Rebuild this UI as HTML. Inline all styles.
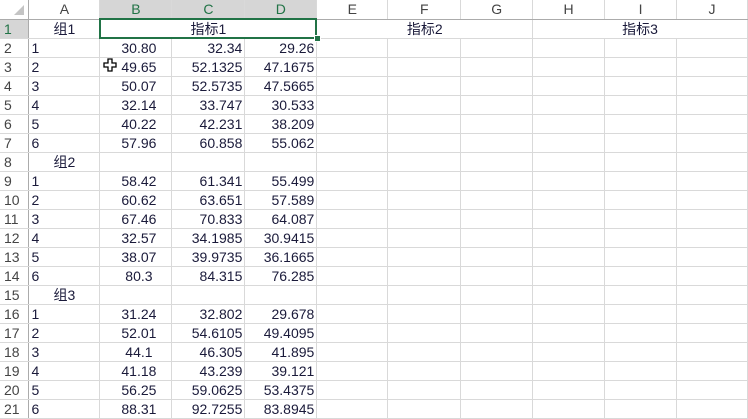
<!DOCTYPE html>
<html><head><meta charset="utf-8"><style>
body{margin:0;width:748px;height:418px;overflow:hidden;background:#fff;font-family:"Liberation Sans","Noto Sans CJK SC",sans-serif;}
table{border-collapse:collapse;table-layout:fixed;position:absolute;left:0;top:0;}
td{height:18px;padding:0 2px;border:1px solid #d9d9d9;font-size:14px;color:#1a1a3a;white-space:nowrap;overflow:hidden;line-height:18px;}
tr.h td{background:#fff;color:#444;text-align:center;border-bottom:1px solid #ababab;border-top:none;}
tr.h td.sel{background:#d6d6d6;color:#217346;border-bottom:2px solid #217346;}
td.rh{background:#fff;color:#444;text-align:left;padding-left:4px;border-left:none;border-right:1px solid #ababab;}
td.rh.sel{background:#d6d6d6;color:#217346;}
td.c{text-align:center}
td.r{text-align:right}
td.b{text-align:center;padding-left:8px}
.selbox{position:absolute;left:99px;top:18px;width:214px;height:17px;border:2px solid #217346;}
.handle{position:absolute;left:314px;top:35px;width:5px;height:5px;background:#217346;border:1px solid #fff;}
.corner{position:absolute;left:14px;top:5px;width:0;height:0;border-left:10px solid transparent;border-bottom:10px solid #c4c4c4;}
</style></head><body>
<table>
<colgroup><col style="width:29px"><col style="width:71px"><col style="width:72px"><col style="width:73px"><col style="width:72px"><col style="width:71px"><col style="width:73px"><col style="width:72px"><col style="width:72px"><col style="width:72px"><col style="width:71px"></colgroup>
<tr class="h"><td style="background:#fff;border-left:none;border-right:1px solid #ababab"></td><td>A</td><td class="sel">B</td><td class="sel">C</td><td class="sel">D</td><td>E</td><td>F</td><td>G</td><td>H</td><td>I</td><td>J</td></tr>
<tr><td class="rh sel">1</td><td class="c">组1</td><td colspan="3" class="c">指标1</td><td colspan="3" class="c">指标2</td><td colspan="3" class="c">指标3</td></tr>
<tr><td class="rh">2</td><td>1</td><td class="b">30.80</td><td class="r">32.34</td><td class="r">29.26</td><td></td><td></td><td></td><td></td><td></td><td></td></tr>
<tr><td class="rh">3</td><td>2</td><td class="b">49.65</td><td class="r">52.1325</td><td class="r">47.1675</td><td></td><td></td><td></td><td></td><td></td><td></td></tr>
<tr><td class="rh">4</td><td>3</td><td class="b">50.07</td><td class="r">52.5735</td><td class="r">47.5665</td><td></td><td></td><td></td><td></td><td></td><td></td></tr>
<tr><td class="rh">5</td><td>4</td><td class="b">32.14</td><td class="r">33.747</td><td class="r">30.533</td><td></td><td></td><td></td><td></td><td></td><td></td></tr>
<tr><td class="rh">6</td><td>5</td><td class="b">40.22</td><td class="r">42.231</td><td class="r">38.209</td><td></td><td></td><td></td><td></td><td></td><td></td></tr>
<tr><td class="rh">7</td><td>6</td><td class="b">57.96</td><td class="r">60.858</td><td class="r">55.062</td><td></td><td></td><td></td><td></td><td></td><td></td></tr>
<tr><td class="rh">8</td><td class="c">组2</td><td></td><td></td><td></td><td></td><td></td><td></td><td></td><td></td><td></td></tr>
<tr><td class="rh">9</td><td>1</td><td class="b">58.42</td><td class="r">61.341</td><td class="r">55.499</td><td></td><td></td><td></td><td></td><td></td><td></td></tr>
<tr><td class="rh">10</td><td>2</td><td class="b">60.62</td><td class="r">63.651</td><td class="r">57.589</td><td></td><td></td><td></td><td></td><td></td><td></td></tr>
<tr><td class="rh">11</td><td>3</td><td class="b">67.46</td><td class="r">70.833</td><td class="r">64.087</td><td></td><td></td><td></td><td></td><td></td><td></td></tr>
<tr><td class="rh">12</td><td>4</td><td class="b">32.57</td><td class="r">34.1985</td><td class="r">30.9415</td><td></td><td></td><td></td><td></td><td></td><td></td></tr>
<tr><td class="rh">13</td><td>5</td><td class="b">38.07</td><td class="r">39.9735</td><td class="r">36.1665</td><td></td><td></td><td></td><td></td><td></td><td></td></tr>
<tr><td class="rh">14</td><td>6</td><td class="b">80.3</td><td class="r">84.315</td><td class="r">76.285</td><td></td><td></td><td></td><td></td><td></td><td></td></tr>
<tr><td class="rh">15</td><td class="c">组3</td><td></td><td></td><td></td><td></td><td></td><td></td><td></td><td></td><td></td></tr>
<tr><td class="rh">16</td><td>1</td><td class="b">31.24</td><td class="r">32.802</td><td class="r">29.678</td><td></td><td></td><td></td><td></td><td></td><td></td></tr>
<tr><td class="rh">17</td><td>2</td><td class="b">52.01</td><td class="r">54.6105</td><td class="r">49.4095</td><td></td><td></td><td></td><td></td><td></td><td></td></tr>
<tr><td class="rh">18</td><td>3</td><td class="b">44.1</td><td class="r">46.305</td><td class="r">41.895</td><td></td><td></td><td></td><td></td><td></td><td></td></tr>
<tr><td class="rh">19</td><td>4</td><td class="b">41.18</td><td class="r">43.239</td><td class="r">39.121</td><td></td><td></td><td></td><td></td><td></td><td></td></tr>
<tr><td class="rh">20</td><td>5</td><td class="b">56.25</td><td class="r">59.0625</td><td class="r">53.4375</td><td></td><td></td><td></td><td></td><td></td><td></td></tr>
<tr><td class="rh">21</td><td>6</td><td class="b">88.31</td><td class="r">92.7255</td><td class="r">83.8945</td><td></td><td></td><td></td><td></td><td></td><td></td></tr>
</table>
<div class="corner"></div>
<div class="selbox"></div>
<div class="handle"></div>
<svg style="position:absolute;left:103px;top:58px" width="14" height="14" viewBox="0 0 14 14"><path d="M5 1h4v4h4v4h-4v4h-4v-4h-4v-4h4z" fill="#fff" stroke="#000" stroke-width="1.3"/></svg>
</body></html>
